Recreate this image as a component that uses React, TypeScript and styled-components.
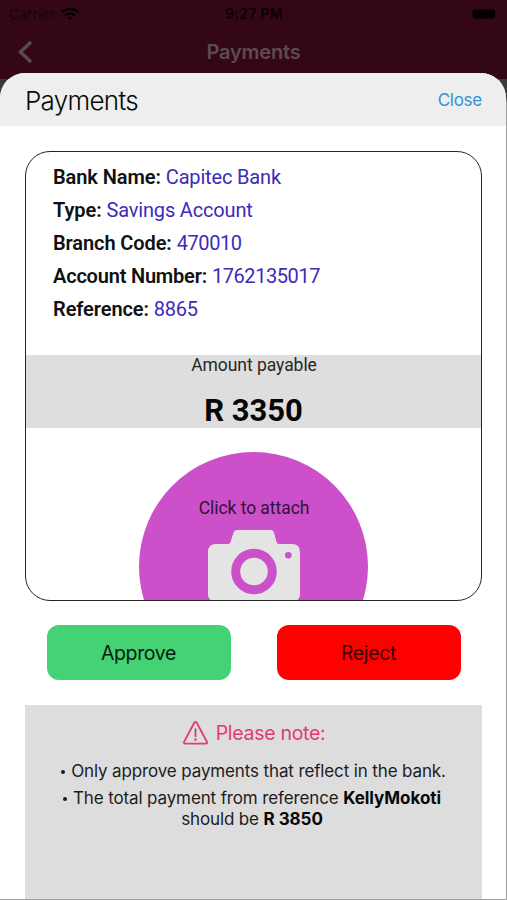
import React from "react";
import styled, { createGlobalStyle } from "styled-components";

const inter = `Inter, "Liberation Sans", sans-serif`;
const roboto = `Roboto, "Liberation Sans", sans-serif`;

const GlobalStyle = createGlobalStyle`
  *, *::before, *::after { box-sizing: border-box; }
  body { margin: 0; background: #fff; }
  button { border: 0; padding: 0; margin: 0; background: none; }
`;

const Screen = styled.div`
  width: 507px;
  height: 900px;
  display: flex;
  flex-direction: column;
  overflow: hidden;
  font-family: ${inter};
  background: #a0a0a0;
`;

const TopArea = styled.div`
  flex: none;
  height: 73px;
  background: #330716;
`;

const StatusBar = styled.div`
  display: grid;
  grid-template-columns: 1fr auto 1fr;
  align-items: center;
  height: 28px;
  padding: 0 8px 0 9px;
  font-size: 13px;
  line-height: 28px;
`;

const Carrier = styled.div`
  display: flex;
  align-items: center;
  gap: 6px;
  color: #16030a;
  font-size: 13.5px;
  letter-spacing: 0.3px;
`;

const Clock = styled.div`
  color: #0b0104;
  font-size: 14px;
  font-weight: 600;
  letter-spacing: 0.3px;
`;

const BatteryIcon = styled.svg`
  justify-self: end;
  margin-top: -1px;
`;

const NavBar = styled.div`
  display: grid;
  grid-template-columns: 60px 1fr 60px;
  align-items: center;
  height: 48px;
`;

const BackIcon = styled.svg`
  margin-left: 17px;
`;

const NavTitle = styled.div`
  text-align: center;
  color: #5d4a51;
  font-size: 20px;
  font-weight: 600;
  letter-spacing: -0.2px;
`;

const SheetFrame = styled.div`
  flex: 1;
  padding: 0 1px 1px 0;
  background: linear-gradient(#330716 0 6px, #3b393a 6px 24px, #a0a0a0 30px);
`;

const Sheet = styled.div`
  height: 100%;
  display: flex;
  flex-direction: column;
  border-radius: 25px 25px 0 0;
  overflow: hidden;
  background: #fff;
`;

const SheetHeader = styled.div`
  flex: none;
  display: flex;
  align-items: center;
  justify-content: space-between;
  height: 53px;
  padding: 2px 24px 0 25px;
  background: #eee;
`;

const SheetTitle = styled.div`
  font-size: 26px;
  font-weight: 300;
  letter-spacing: -0.72px;
  color: #080808;
`;

const CloseButton = styled.button`
  padding-bottom: 1px;
  font-family: ${inter};
  font-size: 17px;
  letter-spacing: -0.25px;
  color: #3492d4;
`;

const Card = styled.div`
  flex: none;
  height: 450px;
  margin: 25px 24px 0 25px;
  border: 1.4px solid #252525;
  border-radius: 25px;
  overflow: hidden;
  font-family: ${roboto};
`;

const Details = styled.div`
  height: 203px;
  padding: 9px 0 0 27px;
`;

const Detail = styled.div`
  height: 33px;
  line-height: 33px;
  font-size: 20px;
  color: #3c2bb8;
  white-space: pre;
`;

const DetailLabel = styled.span<{ $spacing: number }>`
  font-weight: 600;
  letter-spacing: ${(p) => p.$spacing}px;
  color: #111;
`;

const DetailValue = styled.span<{ $spacing: number }>`
  letter-spacing: ${(p) => p.$spacing}px;
`;

const Amount = styled.div`
  height: 73px;
  background: #dedede;
  text-align: center;
  color: #262626;
`;

const AmountLabel = styled.div`
  height: 20px;
  padding-left: 1px;
  line-height: 20px;
  font-size: 17.5px;
  letter-spacing: -0.05px;
`;

const AmountValue = styled.div`
  padding-top: 16px;
  line-height: 39px;
  font-size: 31px;
  font-weight: 700;
  color: #060606;
`;

const AttachButton = styled.button`
  display: flex;
  flex-direction: column;
  align-items: center;
  width: 229px;
  height: 229px;
  margin: 24px auto 0;
  padding: 46px 0 0 1px;
  border-radius: 50%;
  background: #cb50c9;
  font-family: ${roboto};
  font-size: 17.5px;
  line-height: 20px;
  letter-spacing: -0.05px;
  color: #33123a;
`;

const CameraIcon = styled.svg`
  flex: none;
  margin-top: 12px;
`;

const Actions = styled.div`
  flex: none;
  display: flex;
  justify-content: space-between;
  margin: 24px 45px 0 47px;
`;

const ActionButton = styled.button<{ $kind: "approve" | "reject" }>`
  width: 184px;
  height: 55px;
  padding: 0 1px 0 0;
  border-radius: 12px;
  background: ${(p) => (p.$kind === "approve" ? "#44d274" : "#fe0000")};
  color: ${(p) => (p.$kind === "approve" ? "#071c0d" : "#3a0000")};
  font-family: ${inter};
  font-size: 19.5px;
  letter-spacing: -0.35px;
`;

const Note = styled.div`
  flex: 1;
  margin: 25px 24px -1px 25px;
  padding-top: 13px;
  background: #ddd;
  color: #1c1c1c;
`;

const NoteHeading = styled.div`
  display: flex;
  align-items: center;
  justify-content: center;
  gap: 8px;
  height: 29px;
  padding-left: 1px;
  font-size: 19.5px;
  letter-spacing: -0.3px;
  color: #e23a76;
`;

const NoteLine = styled.div<{ $top: number; $shift: number }>`
  margin-top: ${(p) => p.$top}px;
  padding-right: ${(p) => p.$shift}px;
  text-align: center;
  font-size: 17px;
  line-height: 21px;
  letter-spacing: -0.13px;
  white-space: pre-line;
`;

const Strong = styled.span`
  font-weight: 700;
  letter-spacing: -0.05px;
  color: #080808;
`;

const Bullet = styled.span`
  display: inline-block;
  width: 4px;
  height: 4px;
  margin-right: 6px;
  border-radius: 50%;
  background: #1c1c1c;
  vertical-align: 3px;
`;

const details = [
  { label: "Bank Name:", value: "Capitec Bank", ls: -0.08, vs: -0.17 },
  { label: "Type:", value: "Savings Account", ls: -0.08, vs: -0.17 },
  { label: "Branch Code:", value: "470010", ls: -0.1, vs: -0.4 },
  { label: "Account Number:", value: "1762135017", ls: -0.2, vs: -0.42 },
  { label: "Reference:", value: "8865", ls: -0.08, vs: -0.3 },
];

export default function App() {
  return (
    <>
      <GlobalStyle />
      <Screen>
        <TopArea>
          <StatusBar>
            <Carrier>
              Carrier
              <svg width="18" height="14" viewBox="0 0 18 14" fill="none" stroke="#090103" strokeWidth="2.5">
                <path d="M1 5.2a11.5 11.5 0 0 1 16 0" />
                <path d="M4.1 8.5a7 7 0 0 1 9.8 0" />
                <path d="M6.5 10.6a3.7 3.7 0 0 1 5 0L9 13.2z" fill="#090103" stroke="none" />
              </svg>
            </Carrier>
            <Clock>9:27 PM</Clock>
            <BatteryIcon width="27" height="10" viewBox="0 0 27 10">
              <rect x="0.5" y="0.5" width="22.5" height="9" rx="2.5" fill="#020001" />
              <path d="M24.5 3.3v3.4c1.6-.5 1.6-2.9 0-3.4z" fill="#1c040c" />
            </BatteryIcon>
          </StatusBar>
          <NavBar>
            <BackIcon width="16" height="24" viewBox="0 0 16 24" fill="none" stroke="#5d4a51" strokeWidth="3.4">
              <path d="M14 2 3.3 12 14 22" />
            </BackIcon>
            <NavTitle>Payments</NavTitle>
          </NavBar>
        </TopArea>
        <SheetFrame>
          <Sheet>
            <SheetHeader>
              <SheetTitle>Payments</SheetTitle>
              <CloseButton>Close</CloseButton>
            </SheetHeader>
            <Card>
              <Details>
                {details.map((d) => (
                  <Detail key={d.label}>
                    <DetailLabel $spacing={d.ls}>{d.label}</DetailLabel>{" "}
                    <DetailValue $spacing={d.vs}>{d.value}</DetailValue>
                  </Detail>
                ))}
              </Details>
              <Amount>
                <AmountLabel>Amount payable</AmountLabel>
                <AmountValue>R 3350</AmountValue>
              </Amount>
              <AttachButton>
                Click to attach
                <CameraIcon width="92" height="71" viewBox="0 0 92 71">
                  <path
                    d="M8 14h12q2 0 2.5-2l2.9-9q.9-3 4-3h33q3 0 3.8 3l2.3 9q.5 2 2.5 2h13q8 0 8 8v42q0 7-7 7H7q-7 0-7-7V22q0-8 8-8z"
                    fill="#e4e4e4"
                  />
                  <circle cx="46" cy="41.5" r="18.3" fill="none" stroke="#cb50c9" strokeWidth="9" />
                  <circle cx="80.3" cy="25.3" r="3.3" fill="#cb50c9" />
                </CameraIcon>
              </AttachButton>
            </Card>
            <Actions>
              <ActionButton $kind="approve">Approve</ActionButton>
              <ActionButton $kind="reject">Reject</ActionButton>
            </Actions>
            <Note>
              <NoteHeading>
                <svg width="25" height="24" viewBox="0 0 26 25" fill="none" stroke="#e23a76" strokeWidth="1.9" strokeLinecap="round" strokeLinejoin="round">
                  <path d="M11.7 1.8 1.2 21.5q-1 2 1.2 2h21.2q2.2 0 1.2-2L14.3 1.8q-1.3-2-2.6 0z" />
                  <path d="M13 8.5v7.3" />
                  <circle cx="13" cy="19.3" r=".5" />
                </svg>
                Please note:
              </NoteHeading>
              <NoteLine $top={14} $shift={0}>
                <Bullet />Only approve payments that reflect in the bank.
              </NoteLine>
              <NoteLine $top={6} $shift={3}>
                <Bullet />The total payment from reference <Strong>KellyMokoti</Strong>
                {"\n"}should be <Strong>R 3850</Strong>
              </NoteLine>
            </Note>
          </Sheet>
        </SheetFrame>
      </Screen>
    </>
  );
}
